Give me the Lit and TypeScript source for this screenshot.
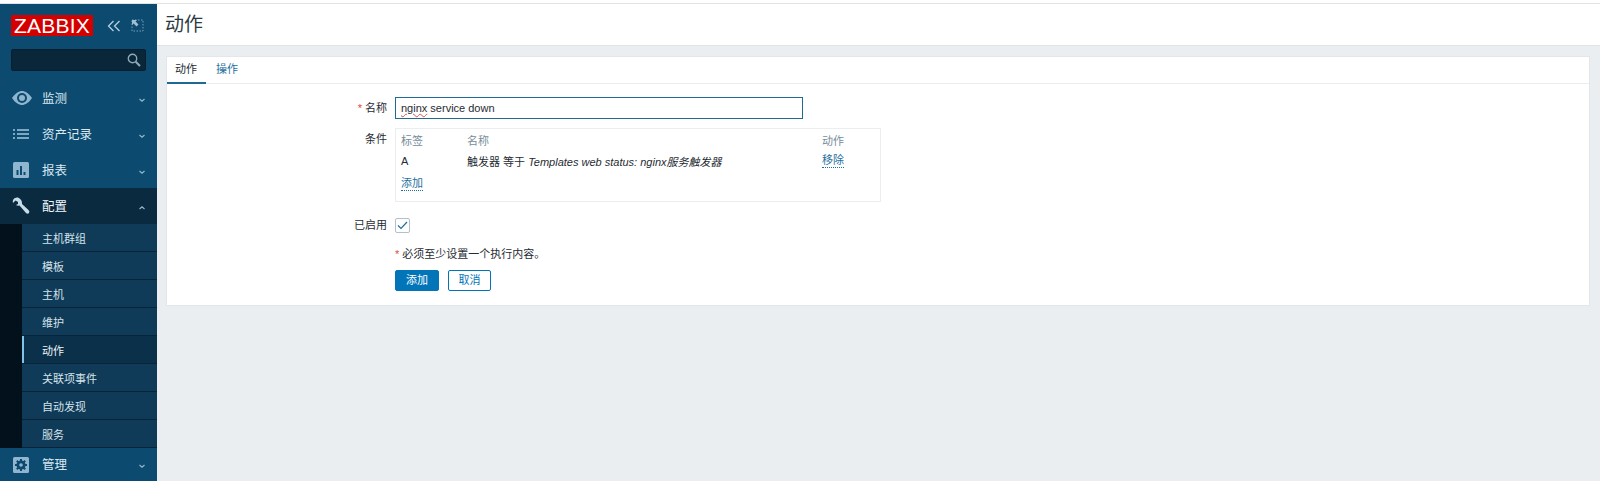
import { LitElement, html, css, svg } from "lit";
import { customElement } from "lit/decorators.js";

const chev = (up: boolean) => html`<svg class="chev" width="8" height="6" viewBox="0 0 8 6"><path d=${up ? "M1.5 4 L4 1.8 L6.5 4" : "M1.5 2 L4 4.2 L6.5 2"} fill="none" stroke="#8fb6ce" stroke-width="1.2"/></svg>`;

const icons: Record<string, unknown> = {
  eye: svg`<path d="M0 9 C4 3 8 2 10 2 C12 2 16 3 20 9 C16 15 12 16 10 16 C8 16 4 15 0 9Z" fill="#8fb6ce"/><circle cx="10" cy="9" r="5" fill="#0c4a70"/><circle cx="10" cy="9" r="3" fill="#8fb6ce"/>`,
  list: svg`<g fill="#7da8c2"><rect x="1" y="4" width="2" height="2"/><rect x="1" y="8" width="2" height="2"/><rect x="1" y="12" width="2" height="2"/><rect x="5" y="4" width="12" height="2"/><rect x="5" y="8" width="12" height="2"/><rect x="5" y="12" width="12" height="2"/></g>`,
  chart: svg`<rect x="1" y="1" width="16" height="16" rx="1.5" fill="#8fb6ce"/><g fill="#0c4a70"><rect x="4.5" y="9" width="2" height="5"/><rect x="8" y="5" width="2" height="9"/><rect x="11.5" y="11" width="2" height="3"/></g>`,
  wrench: svg`<path d="M6 0.5 Q2 0 1 3 Q0.5 5 1 6 L3.5 3.5 L6 5 L6 7 L4 8 Q5.5 9 7.5 8.5 L14 16 Q15.5 17.5 17 16 Q18 14.5 16.5 13 L10 7 Q10.5 2.5 6 0.5Z" fill="#c6dce8"/>`,
  gear: svg`<rect x="1" y="1" width="16" height="16" rx="1.5" fill="#8fb6ce"/><circle cx="9" cy="9" r="4.6" fill="#0c4a70"/><g stroke="#0c4a70" stroke-width="2"><path d="M9 3 V15 M3 9 H15 M4.8 4.8 L13.2 13.2 M13.2 4.8 L4.8 13.2"/></g><circle cx="9" cy="9" r="1.8" fill="#8fb6ce"/>`,
};

const menuItem = (icon: string, label: string, open = false) => html`
  <div class="mi ${open ? "open" : ""}">
    <svg class="mi-icon" width="20" height="18" viewBox="0 0 20 18">${icons[icon]}</svg>
    <span class="mi-label">${label}</span>
    ${chev(open)}
  </div>`;

const subs = ["主机群组", "模板", "主机", "维护", "动作", "关联项事件", "自动发现", "服务"];

@customElement("app-root")
export class AppRoot extends LitElement {
  static styles = css`
    :host { display: block; height: 481px; overflow: hidden; background: #ebeef0;
      font-family: "Liberation Sans", "Noto Sans CJK SC", sans-serif; font-size: 11px; color: #1f2c33; }
    .top { height: 3px; background: #fff; border-bottom: 1px solid #dfe4e7; }
    .page { display: flex; height: 477px; }
    aside { width: 157px; flex: none; background: #0c4a70; display: flex; flex-direction: column; overflow: hidden; }
    .brand { display: flex; align-items: center; height: 45px; padding: 0 0 2px 11px; box-sizing: border-box; flex: none; }
    .logo { width: 82px; height: 21px; background: #d40000; color: #fff; font-size: 21px; line-height: 21px; text-align: center; letter-spacing: 0.2px; }
    .collapse { margin-left: 14px; display: block; }
    .expand { margin-left: 10px; display: block; opacity: 0.8; }
    .search { height: 22px; margin: 0 11px; background: #0a2739; border: 1px solid #06202f; border-radius: 2px; box-sizing: border-box; display: flex; align-items: center; justify-content: flex-end; padding-right: 3px; flex: none; }
    .menu { margin-top: 9px; display: flex; flex-direction: column; flex: 1; }
    .mi { height: 36px; flex: none; display: flex; align-items: center; padding-left: 12px; color: #dbe8ef; font-size: 12.5px; }
    .mi:last-child { height: 33px; }
    .mi.open { background: #0a2a40; color: #f2f7fa; }
    .mi-icon { flex: none; }
    .mi-label { margin-left: 10px; flex: 1; padding-bottom: 2px; }
    .chev { margin: 3px 11px 0 0; flex: none; }
    .subs { background: #02111b; padding-left: 22px; flex: none; }
    .sub { height: 25px; padding-top: 2px; border-bottom: 1px solid #07243a; background: #0f3a58; color: #d5e3ea; line-height: 26px; padding-left: 20px; }
    .sub.active { background: #0b304a; color: #f0f6f9; box-shadow: inset 2px 0 0 #7fc4e6; }
    main { flex: 1; display: flex; flex-direction: column; }
    header { height: 42px; box-sizing: border-box; background: #fff; border-bottom: 1px solid #dfe4e7; display: flex; align-items: center; padding: 0 0 4px 8px; font-size: 19px; color: #2b3940; flex: none; }
    .card { margin: 10px 10px 0 9px; background: #fff; border: 1px solid #e3e7ea; height: 250px; box-sizing: border-box; }
    .tabs { display: flex; height: 27px; border-bottom: 1px solid #ebeef0; box-sizing: border-box; }
    .tab { padding: 0 9px; line-height: 24px; color: #1f6f9e; height: 27px; box-sizing: border-box; white-space: nowrap; }
    .tab.active { color: #1f2c33; border-bottom: 2px solid #1f6a94; width: 39px; padding: 0 8px; }
    .tab + .tab { padding-left: 10px; }
    .row { display: grid; grid-template-columns: 228px auto; }
    .form { padding-top: 13px; }
    .lbl { text-align: right; padding: 1px 8px 0 0; line-height: 21px; }
    .req { color: #d64e3c; margin-right: 3px; }
    .input { width: 408px; height: 22px; box-sizing: border-box; border: 1px solid #1f6a94; padding-left: 5px; line-height: 20px; color: #1f2c33; }
    .wavy { text-decoration: underline wavy #d9534f 1px; text-underline-offset: 1px; }
    .cond { margin-top: 9px; }
    .ctable { width: 486px; height: 74px; box-sizing: border-box; border: 1px solid #ebeef0; padding: 0 5px; display: grid; grid-template-columns: 66px 355px auto; grid-auto-rows: 21px; align-items: center; }
    .th { color: #768d99; }
    .link { color: #1f6f9e; border-bottom: 1px dotted #1f6f9e; line-height: 13px; justify-self: start; }
    i { font-style: italic; }
    .addl { margin-top: 5px; }
    .en { margin-top: 12px; align-items: center; }
    .check { width: 15px; height: 15px; box-sizing: border-box; border: 1px solid #b3c0c8; border-radius: 2px; display: flex; align-items: center; justify-content: center; }
    .note { margin-top: 10px; line-height: 16px; }
    .btns { margin-top: 8px; display: flex; gap: 9px; }
    .btn { height: 21px; box-sizing: border-box; border-radius: 2px; line-height: 19px; text-align: center; border: 1px solid #0275b8; }
    .primary { width: 44px; background: #0275b8; color: #fff; }
    .ghost { width: 43px; background: #fff; color: #0275b8; }
  `;

  render() {
    return html`
      <div class="top"></div>
      <div class="page">
        <aside>
          <div class="brand">
            <div class="logo">ZABBIX</div>
            <svg class="collapse" width="14" height="12" viewBox="0 0 14 12"><path d="M6.5 1 L1.5 6 L6.5 11 M12.5 1 L7.5 6 L12.5 11" fill="none" stroke="#b7d0de" stroke-width="1.3"/></svg>
            <svg class="expand" width="13" height="13" viewBox="0 0 13 13"><rect x="1" y="1" width="11" height="11" fill="none" stroke="#8fb6ce" stroke-dasharray="1.5 1.5"/><path d="M1 1 H6 L4.6 2.6 L7.5 5.5 L5.5 7.5 L2.6 4.6 L1 6Z" fill="#c6dce8"/></svg>
          </div>
          <div class="search">
            <svg width="16" height="16" viewBox="0 0 16 16"><circle cx="6.5" cy="6.5" r="4.2" fill="none" stroke="#8fa9b8" stroke-width="1.4"/><path d="M9.7 9.7 L14 14" stroke="#8fa9b8" stroke-width="2"/></svg>
          </div>
          <div class="menu">
            ${menuItem("eye", "监测")}
            ${menuItem("list", "资产记录")}
            ${menuItem("chart", "报表")}
            ${menuItem("wrench", "配置", true)}
            <div class="subs">
              ${subs.map((s) => html`<div class="sub ${s === "动作" ? "active" : ""}">${s}</div>`)}
            </div>
            ${menuItem("gear", "管理")}
          </div>
        </aside>
        <main>
          <header>动作</header>
          <div class="card">
            <div class="tabs">
              <div class="tab active">动作</div>
              <div class="tab">操作</div>
            </div>
            <div class="form">
              <div class="row">
                <div class="lbl"><span class="req">*</span>名称</div>
                <div class="input"><span class="wavy">nginx</span> service down</div>
              </div>
              <div class="row cond">
                <div class="lbl">条件</div>
                <div class="ctable">
                  <div class="th">标签</div><div class="th">名称</div><div class="th">动作</div>
                  <div>A</div><div>触发器 等于 <i>Templates web status: nginx服务触发器</i></div><a class="link">移除</a>
                  <a class="link addl">添加</a>
                </div>
              </div>
              <div class="row en">
                <div class="lbl">已启用</div>
                <div class="check"><svg width="11" height="9" viewBox="0 0 11 9"><path d="M1 4.5 L4 7.5 L10 1" fill="none" stroke="#1f6f9e" stroke-width="1.2"/></svg></div>
              </div>
              <div class="row note">
                <div></div>
                <div><span class="req">*</span>必须至少设置一个执行内容。</div>
              </div>
              <div class="row">
                <div></div>
                <div class="btns">
                  <div class="btn primary">添加</div>
                  <div class="btn ghost">取消</div>
                </div>
              </div>
            </div>
          </div>
        </main>
      </div>
    `;
  }
}
